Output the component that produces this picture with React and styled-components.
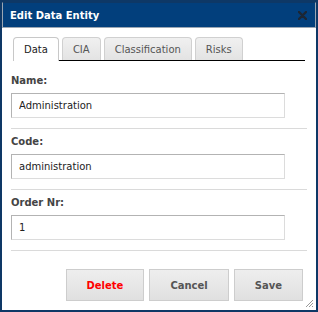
import React from "react"
import styled, { createGlobalStyle } from "styled-components"

const Global = createGlobalStyle`
  html, body {
    margin: 0;
    padding: 0;
    background: #fff;
  }
  body {
    font-family: "DejaVu Sans", Verdana, sans-serif;
    font-size: 10px;
  }
`

const Dialog = styled.div`
  position: relative;
  box-sizing: border-box;
  width: 318px;
  height: 312px;
  border: 2px solid #0e3866;
  background: #fff;
  display: flex;
  flex-direction: column;
`

const TitleBar = styled.div`
  box-sizing: border-box;
  height: 26px;
  display: flex;
  align-items: center;
  justify-content: space-between;
  padding: 0 8px 0 7px;
  background: #023f7c;
  border: 1px solid #9aa6b3;
  border-top-color: #0e3866;
`

const Title = styled.span`
  color: #fff;
  font-weight: bold;
  font-size: 10px;
`

const Close = styled.svg`
  width: 9px;
  height: 9px;
`

const Body = styled.div`
  padding: 9px 9px 0;
  display: flex;
  flex-direction: column;
  flex: 1;
`

const TabStrip = styled.div`
  display: flex;
  align-items: flex-end;
  margin: 0 2px;
`

const TabRail = styled.div`
  flex: 1;
  box-sizing: border-box;
  height: 24px;
  display: flex;
  align-items: flex-end;
  gap: 3px;
  padding-left: 3px;
  border-bottom: 1px solid #000;
`

const Tab = styled.div`
  box-sizing: border-box;
  height: ${p => (p.$active ? 24 : 23)}px;
  padding: 0 10px;
  display: flex;
  align-items: center;
  border: 1px solid ${p => (p.$active ? "#c8c8c8" : "#d0d0d0")};
  border-bottom: none;
  border-radius: 4px 4px 0 0;
  background: ${p => (p.$active ? "#fff" : "linear-gradient(#f0f0f0, #e3e3e3)")};
  color: ${p => (p.$active ? "#222" : "#555")};
  font-size: 10px;
`

const Form = styled.div`
  padding-top: 7px;
`

const Field = styled.div`
  padding: 7px 0 10px;
  border-bottom: 1px solid #dadada;
`

const Label = styled.div`
  font-weight: bold;
  font-size: 10px;
  line-height: 12px;
  color: #444;
  margin-bottom: 6px;
`

const Input = styled.input`
  display: block;
  box-sizing: border-box;
  width: 274px;
  height: 25px;
  margin: 0;
  padding: 0 7px;
  border: 1px solid #dcdcdc;
  border-top-color: #b3b3b3;
  border-left-color: #b3b3b3;
  background: #fff;
  color: #222;
  font-family: "DejaVu Sans", Verdana, sans-serif;
  font-size: 10px;
  outline: none;
`

const Actions = styled.div`
  display: flex;
  justify-content: flex-end;
  gap: 5px;
  margin-top: 18px;
  padding-right: 4px;
`

const Button = styled.button`
  box-sizing: border-box;
  height: 32px;
  padding: 0 20px;
  border: 1px solid #cdcdcd;
  background: linear-gradient(#eeeeee, #e0e0e0);
  color: ${p => (p.$danger ? "#f00" : "#555")};
  font-family: "DejaVu Sans", Verdana, sans-serif;
  font-weight: bold;
  font-size: 10px;
  cursor: pointer;
`

const Grip = styled.svg`
  position: absolute;
  right: 2px;
  bottom: 2px;
  width: 10px;
  height: 10px;
`

export default function App() {
  return (
    <>
      <Global />
      <Dialog>
        <TitleBar>
          <Title>Edit Data Entity</Title>
          <Close viewBox="0 0 9 9">
            <path d="M1 1 L8 8 M8 1 L1 8" stroke="#1c2633" strokeWidth="2.4" strokeLinecap="round" />
          </Close>
        </TitleBar>
        <Body>
          <TabStrip>
            <Tab $active>Data</Tab>
            <TabRail>
              <Tab>CIA</Tab>
              <Tab>Classification</Tab>
              <Tab>Risks</Tab>
            </TabRail>
          </TabStrip>
          <Form>
            <Field>
              <Label>Name:</Label>
              <Input defaultValue="Administration" />
            </Field>
            <Field>
              <Label>Code:</Label>
              <Input defaultValue="administration" />
            </Field>
            <Field>
              <Label>Order Nr:</Label>
              <Input defaultValue="1" />
            </Field>
          </Form>
          <Actions>
            <Button $danger>Delete</Button>
            <Button>Cancel</Button>
            <Button>Save</Button>
          </Actions>
        </Body>
        <Grip viewBox="0 0 10 10">
          <path d="M9 2 L2 9 M9 5 L5 9 M9 8 L8 9" stroke="#999" strokeWidth="1" />
        </Grip>
      </Dialog>
    </>
  )
}
